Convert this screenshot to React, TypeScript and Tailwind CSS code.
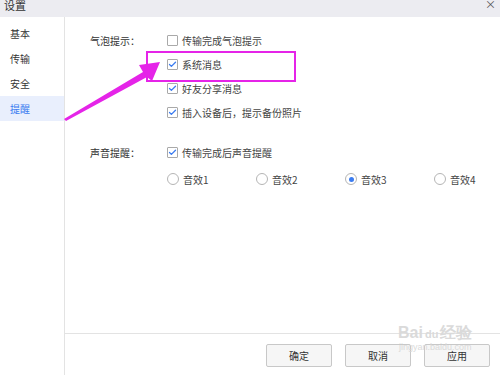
import { Check } from 'lucide-react';

const font = { fontFamily: '"Noto Sans CJK SC", "Noto Sans", sans-serif' };

const menu = ['基本', '传输', '安全', '提醒'];

const CheckBox = ({ checked }: { checked: boolean }) => (
  <span className="w-[11px] h-[11px] border border-[#a9a9a9] rounded-[1px] bg-white flex items-center justify-center shrink-0">
    {checked && <Check className="w-[9px] h-[9px] text-[#3b7cf0]" strokeWidth={3.5} />}
  </span>
);

const Radio = ({ checked }: { checked: boolean }) => (
  <span className="w-[12px] h-[12px] rounded-full border border-[#b5b5b5] bg-white flex items-center justify-center shrink-0">
    {checked && <span className="w-[5px] h-[5px] rounded-full bg-[#3b7cf0]" />}
  </span>
);

const CheckRow = ({ checked, label }: { checked: boolean; label: string }) => (
  <div className="h-[24px] flex items-center gap-[4px]">
    <CheckBox checked={checked} />
    <span>{label}</span>
  </div>
);

const App = () => {
  return (
    <div className="relative w-[500px] h-[375px] bg-white text-[10px] text-[#444] overflow-hidden flex flex-col" style={font}>
      {/* title bar */}
      <div className="h-[17px] bg-[#ececf1] flex items-start justify-between px-[4px] shrink-0">
        <span className="text-[11px] text-[#333] leading-[10px]">设置</span>
        <span className="text-[11px] text-[#555] leading-[8px]">×</span>
      </div>

      <div className="flex flex-1 min-w-0">
        {/* sidebar */}
        <div className="w-[65px] border-r border-[#e3e3e3] pt-[4px] shrink-0">
          {menu.map((m) => (
            <div
              key={m}
              className={
                m === '提醒'
                  ? 'h-[25px] flex items-center pl-[10px] bg-[#e9effd] text-[#3b7cf0]'
                  : 'h-[25px] flex items-center pl-[10px] text-[#333]'
              }
            >
              {m}
            </div>
          ))}
        </div>

        {/* content */}
        <div className="flex-1 min-w-0 flex flex-col">
          <div className="flex-1 pl-[25px] pt-[11px]">
            <div className="flex">
              <div className="w-[77px] h-[24px] flex items-center text-[#333]">气泡提示：</div>
              <div className="flex flex-col">
                <CheckRow checked={false} label="传输完成气泡提示" />
                <CheckRow checked label="系统消息" />
                <CheckRow checked label="好友分享消息" />
                <CheckRow checked label="插入设备后，提示备份照片" />
              </div>
            </div>

            <div className="flex mt-[16px]">
              <div className="w-[77px] h-[24px] flex items-center text-[#333]">声音提醒：</div>
              <div className="flex flex-col">
                <CheckRow checked label="传输完成后声音提醒" />
                <div className="flex mt-[3px] h-[24px] items-center">
                  {['音效1', '音效2', '音效3', '音效4'].map((s) => (
                    <div key={s} className={s === '音效4' ? 'flex items-center gap-[4px]' : 'w-[89px] flex items-center gap-[4px]'}>
                      <Radio checked={s === '音效3'} />
                      <span>{s}</span>
                    </div>
                  ))}
                </div>
              </div>
            </div>
          </div>

          {/* footer */}
          <div className="h-[42px] border-t border-[#e3e3e3] flex items-start justify-end gap-[13px] pr-[10px] pt-[10px] shrink-0">
            {['确定', '取消', '应用'].map((b) => (
              <button
                key={b}
                className="w-[66px] h-[23px] border border-[#c8c8c8] rounded-[2px] bg-[#f6f6f6] text-[#333] text-[10px]"
              >
                {b}
              </button>
            ))}
          </div>
        </div>
      </div>

      {/* annotation box */}
      <div className="absolute left-[146px] top-[51px] w-[150px] h-[31px] border-2 border-[#e524e8]" />

      {/* annotation arrow */}
      <svg className="absolute left-0 top-0" width="500" height="375" viewBox="0 0 500 375">
        <polygon
          points="64,119 143,72 139,65 160,62 152,81 147,77 66,121"
          fill="#e524e8"
        />
      </svg>

      {/* watermark */}
      <div className="absolute left-[398px] top-[325px] flex flex-col items-center text-[#dadada] pointer-events-none">
        <span className="text-[16px] font-bold leading-[16px]" style={{ fontFamily: '"Liberation Sans", sans-serif' }}>
          Bai<span className="text-[11px] mx-[2px]">du</span>经验
        </span>
        <span className="text-[9px] leading-[10px]" style={{ fontFamily: '"Liberation Sans", sans-serif' }}>
          jingyan.baidu.com
        </span>
      </div>
    </div>
  );
};

export default App;
